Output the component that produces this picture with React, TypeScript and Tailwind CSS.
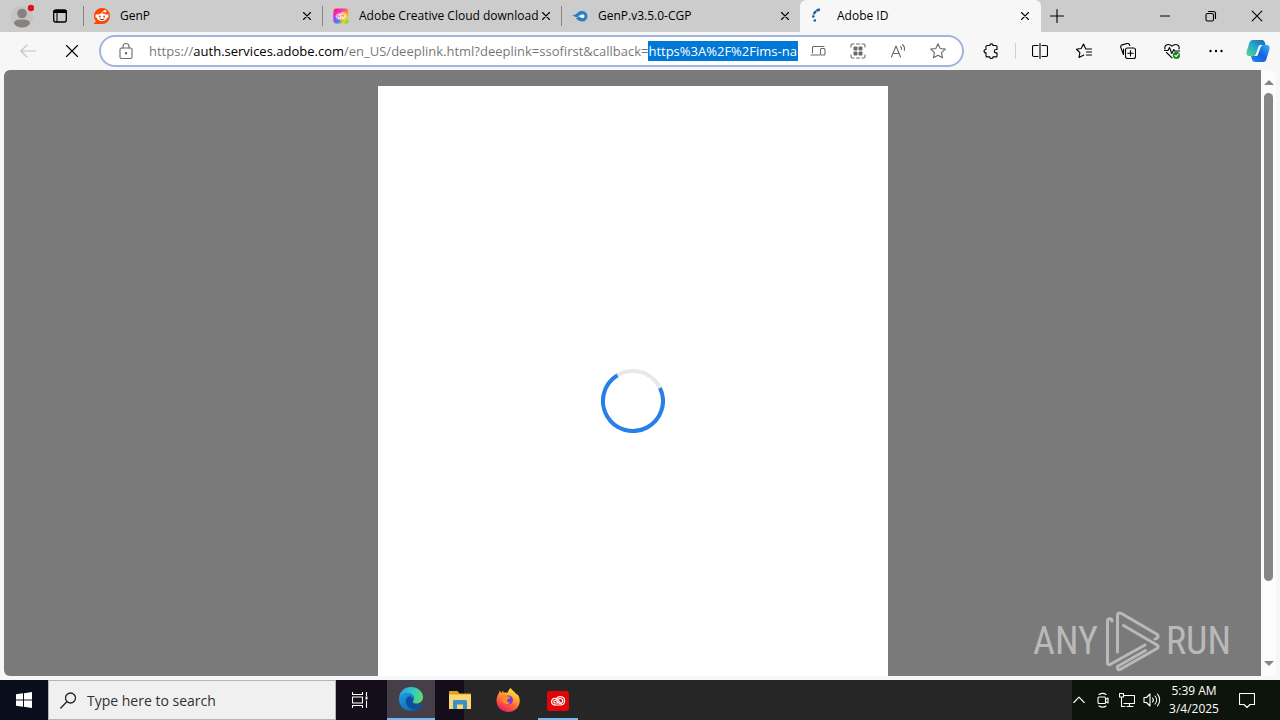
import React, { useEffect, useRef } from 'react';
import clsx from 'clsx';

const PAGE_URL =
  'https://auth.services.adobe.com/en_US/deeplink.html?deeplink=ssofirst&callback=https%3A%2F%2Fims-na1.adobelogin.com';
const SELECTION_START = PAGE_URL.indexOf('https%3A');

type SvgProps = {
  children: React.ReactNode;
  className?: string;
  box?: string;
};

const Glyph: React.FC<SvgProps> = ({ children, className = 'w-4 h-4', box = '0 0 16 16' }) => (
  <svg
    viewBox={box}
    className={clsx('shrink-0', className)}
    fill="none"
    stroke="currentColor"
    strokeWidth={1.1}
    strokeLinecap="round"
    strokeLinejoin="round"
    aria-hidden="true"
  >
    {children}
  </svg>
);

const CloseGlyph = ({ className = 'w-4 h-4' }: { className?: string }) => (
  <Glyph className={className}>
    <path d="M4.500 4.500l7 7M11.500 4.500l-7 7" />
  </Glyph>
);

const RedditIcon = () => (
  <Glyph className="w-4 h-4">
    <g stroke="none">
      <path d="M8 0a8 8 0 1 1 0 16H.6c-.5 0-.7-.6-.3-.9L2 13.300A8 8 0 0 1 8 0z" fill="#ff4500" />
      <circle cx="3" cy="8" r="1.700" fill="#fff" />
      <circle cx="13" cy="8" r="1.700" fill="#fff" />
      <ellipse cx="8" cy="9.300" rx="5.200" ry="3.900" fill="#fff" />
      <circle cx="11" cy="3.200" r="1.300" fill="#fff" />
      <circle cx="5.900" cy="8.600" r="1" fill="#ff4500" />
      <circle cx="10.100" cy="8.600" r="1" fill="#ff4500" />
    </g>
    <path d="M8 5.500c0-1.500.9-2.300 2.300-2.300" stroke="#fff" strokeWidth={0.8} />
    <path d="M6 11c1.200 1 2.800 1 4 0" stroke="#222" strokeWidth={0.9} />
  </Glyph>
);

const CloudRings = () => (
  <g fill="none" stroke="#fff" strokeWidth={1.2}>
    <path d="M5 13h5.500a4.200 4.200 0 1 0-4.100-5.600" />
    <path d="M5 13a3.300 3.300 0 1 1 2.300-5.500l3 2.900" />
    <path d="M7.800 11H5.200a1.400 1.400 0 1 1 1-2.400L8.800 11a2.500 2.500 0 1 0-.2-4" />
  </g>
);

const CreativeCloudIcon = () => (
  <Glyph className="w-4 h-4">
    <defs>
      <linearGradient id="cc-rainbow" x1="0" y1="0" x2="1" y2="1">
        <stop offset="0" stopColor="#ff1d3c" />
        <stop offset="0.300" stopColor="#f02cc0" />
        <stop offset="0.550" stopColor="#ff8c2a" />
        <stop offset="0.800" stopColor="#d8e020" />
        <stop offset="1" stopColor="#28c060" />
      </linearGradient>
      <linearGradient id="cc-side" x1="0" y1="0.400" x2="0.800" y2="1">
        <stop offset="0" stopColor="#c030ff" />
        <stop offset="0.600" stopColor="#3a86ff" />
        <stop offset="1" stopColor="#3a86ff" stopOpacity="0" />
      </linearGradient>
    </defs>
    <rect x="0.500" y="0.500" width="15" height="15" rx="3" fill="url(#cc-rainbow)" stroke="none" />
    <path d="M.5 5v7.500a3 3 0 0 0 3 3H11z" fill="url(#cc-side)" stroke="none" />
    <g transform="translate(2 1.200) scale(.75)">
      <CloudRings />
    </g>
  </Glyph>
);

const MediaFireIcon = () => (
  <Glyph className="w-4 h-4">
    <path d="M0 7.500c2-.2 3.500-.9 5-2.300C6.500 3.600 8 3 10.300 3a5.200 5.200 0 0 1 0 10.400c-3 0-4.800-1.500-6.400-3 1-.2 1.500-.5 2-.9C4.500 9.300 2 8.300 0 7.500z" fill="#2b7fc7" stroke="none" />
    <path d="M7 8.200c1.300 0 1.800-1.500 3.600-1.500a1.500 1.500 0 0 1 0 3c-1.800 0-2.300-1.500-3.600-1.500z" fill="#fff" stroke="#fff" strokeWidth={0.8} />
  </Glyph>
);

const TabSpinner = () => (
  <Glyph className="w-4 h-4">
    <path d="M8.800 1.500C5.800 2 3.400 4 2.600 7" stroke="#1d5a96" strokeWidth={2.400} strokeDasharray="3.600 .5" strokeLinecap="butt" />
    <circle cx="2.300" cy="8.500" r="1.300" fill="#1d5a96" stroke="none" />
    <circle cx="3.800" cy="12.500" r="1.300" fill="#1d5a96" stroke="none" />
  </Glyph>
);

const TABS = [
  { title: 'GenP', icon: <RedditIcon />, active: false },
  { title: 'Adobe Creative Cloud download', icon: <CreativeCloudIcon />, active: false },
  { title: 'GenP.v3.5.0-CGP', icon: <MediaFireIcon />, active: false },
  { title: 'Adobe ID', icon: <TabSpinner />, active: true },
];

const TabStrip = () => (
  <header className="flex h-8 bg-[#cccccc]">
    <div className="flex w-[83px] shrink-0 items-center">
      <button aria-label="Profile" className="flex w-11 justify-center">
        <Glyph className="w-6 h-6" box="0 0 24 24">
          <g stroke="none">
            <circle cx="12" cy="13" r="11" fill="#c6c4c2" />
            <circle cx="12" cy="9.500" r="4.800" fill="#87827f" />
            <path d="M4 19.500c0-2.500 2-4 8-4s8 1.500 8 4c-1.500 2.500-4.500 4-8 4s-6.500-1.500-8-4z" fill="#87827f" />
            <circle cx="21" cy="4" r="3.200" fill="#e0101c" />
          </g>
        </Glyph>
      </button>
      <button aria-label="Tab actions" className="flex w-8 justify-center">
        <Glyph>
          <rect x="1.700" y="2" width="12.600" height="12" rx="2" strokeWidth={1.300} />
          <path d="M2.500 3.500h11" strokeWidth={3} />
          <path d="M5 5v9" />
        </Glyph>
      </button>
    </div>
    {TABS.map((tab) => (
      <div
        key={tab.title}
        className={clsx(
          'flex min-w-0 items-center',
          tab.active ? 'w-[241px] rounded-t-md bg-[#f7f7f7]' : 'w-[239px]',
        )}
      >
        <span className={clsx('h-5 w-px shrink-0', tab.active ? 'bg-transparent' : 'bg-[#858585]')} />
        <span className="ml-2.5 flex shrink-0">{tab.icon}</span>
        <span className="ml-2.5 min-w-0 flex-1 overflow-hidden text-[12px] whitespace-nowrap">{tab.title}</span>
        <button aria-label={`Close ${tab.title}`} className={clsx('flex shrink-0', tab.active ? 'mr-2' : 'mr-[7px]')}>
          <CloseGlyph />
        </button>
      </div>
    ))}
    <button aria-label="New tab" className="flex w-8 shrink-0 items-center justify-center">
      <Glyph>
        <path d="M8 1.500v13M1.500 8h13" />
      </Glyph>
    </button>
    <div className="ml-auto flex shrink-0">
      <button aria-label="Minimize" className="flex w-[46px] items-center justify-center">
        <Glyph>
          <path d="M3.500 8h9" />
        </Glyph>
      </button>
      <button aria-label="Restore" className="flex w-[46px] items-center justify-center">
        <Glyph>
          <rect x="3" y="5.500" width="7.500" height="7.500" rx="1.500" />
          <path d="M5.500 3.500h5a2 2 0 0 1 2 2v5" />
        </Glyph>
      </button>
      <button aria-label="Close window" className="flex w-[46px] items-center justify-center">
        <Glyph>
          <path d="M3.200 3.200l9.600 9.600M12.800 3.200l-9.600 9.600" />
        </Glyph>
      </button>
    </div>
  </header>
);

const AddressBar = () => {
  const inputRef = useRef<HTMLInputElement>(null);

  useEffect(() => {
    const input = inputRef.current;
    if (!input) return;
    input.focus({ preventScroll: true });
    input.setSelectionRange(SELECTION_START, PAGE_URL.length);
    input.scrollLeft = 0;
  }, []);

  return (
    <div className="flex h-8 min-w-0 flex-1 items-center rounded-full border-2 border-[#9fb5da] bg-white text-[#6a6a6a]">
      <Glyph className="ml-4 w-[18px] h-[18px]" box="0 0 18 18">
        <rect x="3" y="6" width="12" height="10.500" rx="1.500" />
        <path d="M6 6V4.500a3 3 0 0 1 6 0V6" />
        <circle cx="9" cy="11.200" r="0.700" fill="currentColor" />
      </Glyph>
      <div className="relative ml-3.5 min-w-0 flex-1">
        <input
          ref={inputRef}
          type="text"
          aria-label="Address"
          defaultValue={PAGE_URL}
          spellCheck={false}
          className="block h-5 w-full text-[13px] leading-5 text-black outline-none selection:bg-[#0078d7] selection:text-white"
        />
        {/* dim the scheme and the path, leave the host dark */}
        <span className="pointer-events-none absolute inset-y-0 left-0 w-11 bg-white/45" />
        <span className="pointer-events-none absolute inset-y-0 left-[194px] w-[305px] bg-white/45" />
      </div>
      <div className="flex shrink-0">
        <button aria-label="Send to device" className="flex w-10 justify-center">
          <Glyph>
            <path d="M1 12h8.500M2.500 10V4.500a1 1 0 0 1 1-1H14" />
            <rect x="10.500" y="5.500" width="4.500" height="6.500" rx="1" />
          </Glyph>
        </button>
        <button aria-label="Apps available" className="flex w-10 justify-center">
          <Glyph>
            <path d="M1 4V2.500A1.500 1.500 0 0 1 2.500 1H4M12 1h1.500A1.500 1.500 0 0 1 15 2.500V4M15 12v1.500a1.500 1.500 0 0 1-1.500 1.500H12M4 15H2.500A1.500 1.500 0 0 1 1 13.500V12M6.500 1h3M6.500 15h3" />
            <g fill="currentColor" stroke="none">
              <rect x="3.500" y="3.500" width="4" height="4" rx="1" />
              <rect x="8.500" y="3.500" width="4" height="4" rx="1" />
              <rect x="3.500" y="8.500" width="4" height="4" rx="1" />
              <rect x="8.500" y="8.500" width="4" height="4" rx="1" />
            </g>
          </Glyph>
        </button>
        <button aria-label="Read aloud" className="flex w-10 justify-center">
          <Glyph>
            <path d="M1.500 14L6 3l4.500 11M3 10.500h6M10.500 3.500a3 3 0 0 1 1 3M12.500 1.500a6 6 0 0 1 1.800 6" />
          </Glyph>
        </button>
        <button aria-label="Add to favorites" className="mr-1 flex w-10 justify-center">
          <Glyph>
            <path d="M8 .8l2.200 4.700 5.100.6-3.800 3.500 1 5.100L8 12.200l-4.500 2.500 1-5.100L.7 6.100l5.100-.6z" />
          </Glyph>
        </button>
      </div>
    </div>
  );
};

const CopilotIcon = () => (
  <Glyph className="w-6 h-6" box="0 0 24 24">
    <defs>
      <linearGradient id="copilot-a" x1="0" y1="1" x2="1" y2="0">
        <stop offset="0" stopColor="#5ad88a" />
        <stop offset="0.500" stopColor="#24a9c8" />
        <stop offset="1" stopColor="#1464b8" />
      </linearGradient>
      <linearGradient id="copilot-b" x1="0" y1="1" x2="1" y2="0">
        <stop offset="0" stopColor="#1a8df0" />
        <stop offset="0.500" stopColor="#1a5fe0" />
        <stop offset="1" stopColor="#35b4ff" />
      </linearGradient>
    </defs>
    <g stroke="none">
      <path d="M7 1h9c1.500 0 2.500 1 3 3l.6 2h-2.800c-1.500 0-2.500.8-3 2.500L12 14c-.8 2.300-1.500 3-3.500 3H3.200C.8 17 0 15 .6 12.500L3.300 4C4 2 5 1 7 1z" fill="url(#copilot-a)" />
      <path d="M17 6h3.800C23.200 6 24 8 23.400 10.500L20.700 19c-.7 3-1.700 4-3.700 4H9.500C7.500 23 6.300 22 5.800 20L5 17h3.500c2 0 2.700-.7 3.500-3l1.800-5.500C14.400 6.800 15.400 6 17 6z" fill="url(#copilot-b)" />
      <path d="M12.500 7.500c.5-1 1.300-1.500 2.500-1.500h1.500c-1.300.5-1.700 1.300-2.200 3L12 15.500c-.5 1-1.200 1.500-2.500 1.500H8c1.200-.5 1.700-1.200 2.200-2.800z" fill="#fff" />
    </g>
  </Glyph>
);

const Toolbar = () => (
  <div className="flex h-[38px] items-center bg-[#f7f7f7]">
    <button aria-label="Back" className="ml-1.5 flex w-11 shrink-0 justify-center text-[#c4c4c4]">
      <Glyph>
        <path d="M15.500 8H.8M7 2L.8 8 7 14" />
      </Glyph>
    </button>
    <button aria-label="Stop loading" className="mr-[5px] flex w-11 shrink-0 justify-center">
      <Glyph>
        <path d="M2.500 2.500l11 11M13.500 2.500l-11 11" />
      </Glyph>
    </button>
    <AddressBar />
    <div className="flex shrink-0 items-center pl-[5px]">
      <button aria-label="Extensions" className="flex w-11 justify-center">
        <Glyph>
          <path d="M5 2.500h1.800a1.600 1.600 0 0 1 3.200 0h3a1 1 0 0 1 1 1V6.500h-1a1.700 1.700 0 0 0 0 3.400h1v3a1 1 0 0 1-1 1h-3a1.600 1.600 0 0 1-3.200 0H4a1 1 0 0 1-1-1v-3a1.700 1.700 0 0 1-1-3.200l1-.2v-3a1 1 0 0 1 1-1z" />
        </Glyph>
      </button>
      <span className="mx-0.5 h-4 w-px bg-[#d0d0d0]" />
      <button aria-label="Split screen" className="flex w-11 justify-center">
        <Glyph>
          <path d="M6 2.500H2a1.500 1.500 0 0 0-1.500 1.500v8A1.500 1.500 0 0 0 2 13.500h4M10 2.500h4a1.500 1.500 0 0 1 1.500 1.500v8a1.500 1.500 0 0 1-1.500 1.500h-4M8 .5v15" />
        </Glyph>
      </button>
      <button aria-label="Favorites" className="flex w-11 justify-center">
        <Glyph>
          <path d="M9.800 6L7.500 1 5.200 5.500l-4.900.7 3.600 3.300-.9 5 4.800-2.500M9.800 6h5.700M10.500 9h5M10.500 12h5" />
        </Glyph>
      </button>
      <button aria-label="Collections" className="flex w-11 justify-center">
        <Glyph>
          <path d="M3.500 11.500L.8 4.500a2 2 0 0 1 1.300-2.600l5-1.400a2 2 0 0 1 2.500 1.500l.2.500M3.500 11.500V6" />
          <rect x="5.500" y="5" width="10" height="10.500" rx="2" />
          <path d="M10.500 7.500v5.500M7.800 10.200h5.400" />
        </Glyph>
      </button>
      <button aria-label="Browser essentials" className="flex w-11 justify-center">
        <Glyph>
          <path d="M1 6C-.2 1.500 5 0 8 3.200c3-3.200 8.200-1.700 7 2.800M.3 7.500H4l1.500-3 2.300 6 2-4 .8 1.500h5M2.500 9.500L8 14.800" />
          <circle cx="12.500" cy="12.300" r="3.600" fill="#15841b" stroke="none" />
          <path d="M10.900 12.400l1.200 1.200 2.100-2.400" stroke="#fff" />
        </Glyph>
      </button>
      <button aria-label="Settings and more" className="flex w-11 justify-center">
        <Glyph>
          <g fill="currentColor" stroke="none">
            <circle cx="2.500" cy="8" r="1.200" />
            <circle cx="8" cy="8" r="1.200" />
            <circle cx="13.500" cy="8" r="1.200" />
          </g>
        </Glyph>
      </button>
      <button aria-label="Copilot" className="mr-2.5 ml-2 flex">
        <CopilotIcon />
      </button>
    </div>
  </div>
);

const Watermark = () => (
  <div className="absolute right-[30px] bottom-1 flex items-center font-['Roboto_Condensed','Open_Sans_Condensed','Liberation_Sans_Narrow',sans-serif] text-[38px] leading-none text-[#b9b9b9]">
    <span>ANY</span>
    <Glyph className="mr-1 ml-1.5 w-[58px] h-[62px]" box="8 5 58 62">
      <g strokeWidth={3}>
        <path d="M16 16c0-3-4.500-3-4.500 0v42c0 1.500 1 2 2.500 1.500L49 40" />
        <path d="M21.500 47V11c0-3 1.500-3.800 4-2.500L60.500 29c3 2 1.500 4.500-1.500 5" />
        <path d="M27.500 20.500L61 40c1.500 1 1.500 2.500 0 3.500L25 64c-2.500 1.500-4 .5-3.500-2.500l28-16" />
      </g>
    </Glyph>
    <span>RUN</span>
  </div>
);

const Viewport = () => (
  <main className="flex flex-1 bg-[#f7f7f7] pr-1 pb-1 pl-1">
    <div className="relative flex flex-1 justify-center rounded-l-md bg-[#7a7a7a] pt-4">
      <section className="flex w-[510px] justify-center bg-white pt-[283px]">
        <svg viewBox="0 0 64 64" className="h-16 w-16" fill="none" strokeWidth="4" role="img" aria-label="Loading">
          <circle cx="32" cy="32" r="30" stroke="#e8e8e8" />
          <path d="M59 19A30 30 0 1 1 16.500 6.300" stroke="#2680eb" />
        </svg>
      </section>
      <Watermark />
    </div>
    <div className="flex w-[15px] flex-col items-center rounded-r-md bg-[#fcfcfc] py-2 text-[#858585]">
      <Glyph className="h-2 w-2.5" box="0 0 10 8">
        <path d="M5 2l5 5H0z" fill="currentColor" stroke="none" />
      </Glyph>
      <div className="mt-[7px] flex w-[9px] flex-1 flex-col">
        <div className="h-[86%] rounded-full bg-[#858585]" />
      </div>
      <Glyph className="h-2 w-2.5" box="0 0 10 8">
        <path d="M5 6l5-5H0z" fill="currentColor" stroke="none" />
      </Glyph>
    </div>
  </main>
);

const EdgeIcon = () => (
  <Glyph className="w-6 h-6" box="0 0 24 24">
    <defs>
      <linearGradient id="edge-top" x1="0" y1="0.300" x2="1" y2="0.400">
        <stop offset="0" stopColor="#2a9fe0" />
        <stop offset="0.500" stopColor="#2cc4c8" />
        <stop offset="1" stopColor="#5fdc72" />
      </linearGradient>
      <linearGradient id="edge-low" x1="0" y1="0" x2="1" y2="1">
        <stop offset="0" stopColor="#1c9de6" />
        <stop offset="1" stopColor="#0c59a4" />
      </linearGradient>
    </defs>
    <g stroke="none">
      <path d="M0 11C.5 4.500 5.500 0 12 0c7 0 12 5 12 10 0 4-3 6.500-6.500 6.500-3 0-4.500-1.200-3.500-2.500 2-2.500.5-7-4-7.500C5 6 1.500 8 0 11z" fill="url(#edge-top)" />
      <path d="M0 12C.5 8 4 5.800 8.500 6c4 .2 6.800 3 6.500 5.500-.2 1.500-1.500 2-1.500 3.500 0 2.500 5 4 9 1.800.8-.3 1.200.4.8 1C21 21.500 17 24 12 24 5 24 0 19 0 12z" fill="url(#edge-low)" />
      <path d="M9.500 9.500C6.500 11 6 15.500 8.500 19c2 2.800 5.500 3.700 9 3.200 2.500-.9 4.500-2.500 5.800-4.400.4-.6 0-1.300-.8-1-4 2.200-9 .7-9-1.800 0-1 .5-1.500 1-2.200-.5-2-2.500-3.800-5-3.300z" fill="#0d4f9c" />
    </g>
  </Glyph>
);

const ExplorerIcon = () => (
  <Glyph className="w-[22px] h-5" box="0 0 22 20">
    <g stroke="none">
      <path d="M0 2c0-.7.400-1 1-1h7.500l2 2.500H21c.6 0 1 .4 1 1V19H0z" fill="#e0a018" />
      <path d="M0 4.500h22V18c0 .6-.4 1-1 1H1c-.6 0-1-.4-1-1z" fill="#f8d775" />
      <path d="M4 19v-7.500c0-.8.600-1.500 1.500-1.500h11c.9 0 1.500.7 1.500 1.500V19h-4v-4.500H8V19z" fill="#3d8fc8" />
    </g>
  </Glyph>
);

const FirefoxIcon = () => (
  <Glyph className="w-6 h-6" box="0 0 24 24">
    <defs>
      <linearGradient id="fox-body" x1="0.800" y1="0" x2="0.300" y2="1">
        <stop offset="0" stopColor="#fff04a" />
        <stop offset="0.400" stopColor="#ffa02c" />
        <stop offset="0.750" stopColor="#ff4a3c" />
        <stop offset="1" stopColor="#e01880" />
      </linearGradient>
    </defs>
    <g stroke="none">
      <path d="M3 5c.2-1.300.5-2 .8-2.300L5.500 5 7.300 2.500l.2 2.300C9 4.300 10.500 4.300 11.500 4.800c.8-2.300 1.800-4 3.500-4.800 0 2 5 4.200 5.500 7V5.500C22.700 7.500 24 10 23.700 13.500 23.300 19.500 18.500 24 12.500 24 5.500 24 .5 19 .5 12.500.5 9.500 1.500 7 3 5z" fill="url(#fox-body)" />
      <circle cx="12.500" cy="12" r="4.500" fill="#7a3cd8" />
      <path d="M5.500 7.500c2-1.500 4.500-.8 5.500.8l3.300.5c0 1.700-2.300 1.800-3.100 3-.6 1.500.8 3 3 2.700-1.500 2.500-6 2-7.500-1-.8-2-.6-4-1.200-6z" fill="#ff8a2a" />
    </g>
  </Glyph>
);

const Taskbar = () => (
  <footer className="flex h-10 bg-[#262626] text-white">
    <button aria-label="Start" className="flex w-12 shrink-0 items-center justify-center bg-[#0a0d1c]">
      <Glyph>
        <path d="M0 2.300l7-1v6.200H0zM8 1.200L16 0v7.500H8zM0 8.500h7v6.200l-7-1zM8 8.500h8V16l-8-1.200z" fill="#fff" stroke="none" />
      </Glyph>
    </button>
    <label className="flex w-72 min-w-0 items-center border border-[#b4b4b4] bg-[#f0f0f0] text-[#222]">
      <Glyph className="ml-[11px] w-[17px] h-[17px]" box="0 0 17 17">
        <circle cx="10.500" cy="6" r="5" strokeWidth={1.300} />
        <path d="M6.800 9.800L.8 16" strokeWidth={1.300} />
      </Glyph>
      <input
        type="search"
        aria-label="Search"
        placeholder="Type here to search"
        className="ml-2.5 min-w-0 flex-1 text-[14px] outline-none placeholder:text-[#303030]"
      />
    </label>
    <button aria-label="Task View" className="flex w-[51px] shrink-0 items-center justify-center bg-[#140e1b] pr-1">
      <Glyph>
        <path d="M.5.500v2h10v-2M.5 15.500v-2h10v2M14.500.5v3M14.500 9v6.500" />
        <rect x="0.500" y="5" width="10" height="6" />
        <rect x="13.500" y="4.500" width="2" height="3" fill="#fff" stroke="none" />
      </Glyph>
    </button>
    <button aria-label="Microsoft Edge" className="flex w-12 shrink-0 items-center justify-center border-b-2 border-[#76b9ed] bg-[#453f4a]">
      <EdgeIcon />
    </button>
    <button aria-label="File Explorer" className="flex w-[49px] shrink-0 items-center justify-center bg-linear-to-r from-[#140e1b] from-60% to-[#262626] to-60%">
      <ExplorerIcon />
    </button>
    <button aria-label="Firefox" className="flex w-12 shrink-0 items-center justify-center">
      <FirefoxIcon />
    </button>
    <button aria-label="Creative Cloud" className="ml-1.5 flex w-10 shrink-0 items-center justify-center border-b-2 border-[#76b9ed] pt-1">
      <Glyph className="w-[22px] h-5" box="-3 -1 22 20">
        <rect x="-3" y="-1" width="22" height="20" rx="3" fill="#e30505" stroke="none" />
        <CloudRings />
      </Glyph>
    </button>
    <div className="ml-auto flex shrink-0 items-center bg-[#0d140b]">
      <button aria-label="Show hidden icons" className="flex w-[14px] justify-center">
        <Glyph className="w-3 h-3" box="0 0 12 12">
          <path d="M.8 8.500L6 3.200l5.200 5.300" />
        </Glyph>
      </button>
      <button aria-label="Meet Now" className="ml-[9px] flex">
        <Glyph>
          <rect x="3" y="5" width="7.500" height="6.500" rx="1" />
          <path d="M10.500 7.500L13 6v5l-2.500-1.500M4 2.500c2.500-1.500 5-1.500 7 0M4 14c2.500 1.500 5 1.500 7 0" />
        </Glyph>
      </button>
      <button aria-label="Network" className="ml-2 flex">
        <Glyph>
          <path d="M5 3.500h10.500v8H5M8 14.500h6M10.500 11.500v3M2.500 5.500v9H6" />
          <path d="M.5 1.500h4v3.500h-4z" />
        </Glyph>
      </button>
      <button aria-label="Volume" className="ml-2 flex">
        <Glyph className="w-[18px] h-4" box="0 0 18 16">
          <path d="M1 5.500h2.500L7 2v12l-3.500-3.500H1zM9.500 6a3 3 0 0 1 0 4M12 4a6 6 0 0 1 0 8M14.500 2.200a9 9 0 0 1 0 11.600" />
        </Glyph>
      </button>
      <div className="ml-1 flex w-[58px] flex-col items-center text-[12px] leading-[18px] whitespace-nowrap">
        <span>5:39 AM</span>
        <span>3/4/2025</span>
      </div>
      <button aria-label="Notifications" className="mr-[25px] ml-4 flex">
        <Glyph>
          <path d="M.5 1.500h15v11H11l-3 3-3-3H.5z" />
        </Glyph>
      </button>
    </div>
  </footer>
);

export default function App() {
  return (
    <div className="flex min-h-screen flex-col overflow-hidden bg-[#f7f7f7] font-['Open_Sans','Noto_Sans',sans-serif] text-black">
      <TabStrip />
      <Toolbar />
      <Viewport />
      <Taskbar />
    </div>
  );
}
